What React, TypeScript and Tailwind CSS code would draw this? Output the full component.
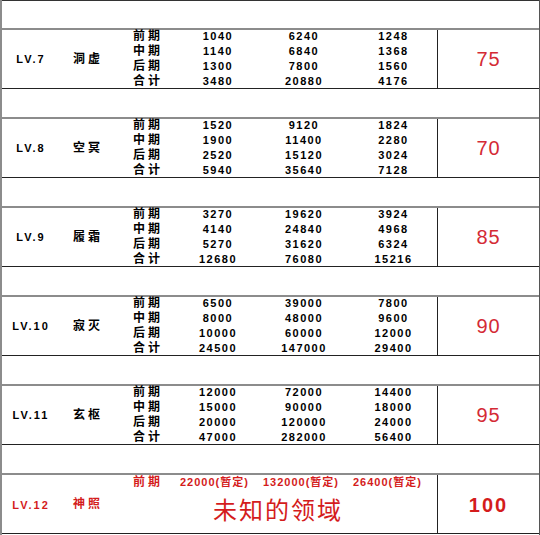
import React from 'react';

type Level = {
  lv: string;
  name: string;
  rows: [string, string, string][];
  score: string;
};

const labels = ['前期', '中期', '后期', '合计'];

const levels: Level[] = [
  {
    lv: 'LV.7',
    name: '洞虚',
    rows: [
      ['1040', '6240', '1248'],
      ['1140', '6840', '1368'],
      ['1300', '7800', '1560'],
      ['3480', '20880', '4176'],
    ],
    score: '75',
  },
  {
    lv: 'LV.8',
    name: '空冥',
    rows: [
      ['1520', '9120', '1824'],
      ['1900', '11400', '2280'],
      ['2520', '15120', '3024'],
      ['5940', '35640', '7128'],
    ],
    score: '70',
  },
  {
    lv: 'LV.9',
    name: '履霜',
    rows: [
      ['3270', '19620', '3924'],
      ['4140', '24840', '4968'],
      ['5270', '31620', '6324'],
      ['12680', '76080', '15216'],
    ],
    score: '85',
  },
  {
    lv: 'LV.10',
    name: '寂灭',
    rows: [
      ['6500', '39000', '7800'],
      ['8000', '48000', '9600'],
      ['10000', '60000', '12000'],
      ['24500', '147000', '29400'],
    ],
    score: '90',
  },
  {
    lv: 'LV.11',
    name: '玄枢',
    rows: [
      ['12000', '72000', '14400'],
      ['15000', '90000', '18000'],
      ['20000', '120000', '24000'],
      ['47000', '282000', '56400'],
    ],
    score: '95',
  },
];

function Gap({ first = false }: { first?: boolean }) {
  return <div className={`h-[28px] bg-white ${first ? 'border-t border-[#333]' : ''}`} />;
}

function LevelBlock({ level }: { level: Level }) {
  return (
    <div className="flex h-[61px] border-t-2 border-b border-t-[#8c8c8c] border-b-[#222]">
      <div className="flex w-[435px]">
        <div className="flex w-[58px] items-center justify-center text-[11px] font-bold tracking-[2px]">
          {level.lv}
        </div>
        <div className="flex w-[56px] items-center justify-center text-[12px] font-bold tracking-[3px]">
          {level.name}
        </div>
        <div className="flex flex-col justify-center">
          {level.rows.map((r, i) => (
            <div key={i} className="flex h-[15px] shrink-0 items-center leading-[15px]">
              <span className="w-[62px] pl-[17px] text-[12px] font-bold tracking-[3px]">{labels[i]}</span>
              <span className="w-[80px] text-center text-[11px] font-bold tracking-[1.5px]">{r[0]}</span>
              <span className="w-[92px] text-center text-[11px] font-bold tracking-[1.5px]">{r[1]}</span>
              <span className="w-[87px] text-center text-[11px] font-bold tracking-[1.5px]">{r[2]}</span>
            </div>
          ))}
        </div>
      </div>
      <div className="flex flex-1 items-center justify-center border-l border-[#222] text-[20px] tracking-[1px] text-[#d42a35]">
        {level.score}
      </div>
    </div>
  );
}

function LastBlock() {
  return (
    <div className="flex h-[61px] border-t-2 border-b border-t-[#8c8c8c] border-b-[#222] text-[#d41c1c]">
      <div className="flex w-[435px]">
        <div className="flex w-[58px] items-center justify-center pt-[2px] text-[11px] font-bold tracking-[2px]">
          LV.12
        </div>
        <div className="flex w-[56px] items-center justify-center text-[12px] font-bold tracking-[3px]">
          神照
        </div>
        <div className="flex flex-col">
          <div className="flex h-[15px] items-center leading-[15px]">
            <span className="w-[62px] pl-[17px] text-[12px] font-bold tracking-[3px]">前期</span>
            <span className="w-[85px] pl-[2px] text-[11px] font-bold tracking-[1px]">22000(暂定)</span>
            <span className="w-[90px] text-[11px] font-bold tracking-[1px]">132000(暂定)</span>
            <span className="text-[11px] font-bold tracking-[1px]">26400(暂定)</span>
          </div>
          <div className="flex h-[42px] items-center pl-[97px] text-[24px] leading-none tracking-[2px]">
            未知的领域
          </div>
        </div>
      </div>
      <div className="flex flex-1 items-center justify-center border-l border-[#222] pt-[2px] text-[20px] font-bold tracking-[2px] text-[#d41c1c]">
        100
      </div>
    </div>
  );
}

export default function App() {
  return (
    <div className="h-[535px] w-[540px] overflow-hidden bg-white font-['Liberation_Sans','Noto_Sans_CJK_SC',sans-serif] text-black">
      <div className="h-[535px] border-l-2 border-r border-l-[#8c8c8c] border-r-[#555]">
        <Gap first />
        {levels.map((l) => (
          <React.Fragment key={l.lv}>
            <LevelBlock level={l} />
            <Gap />
          </React.Fragment>
        ))}
        <LastBlock />
      </div>
    </div>
  );
}
